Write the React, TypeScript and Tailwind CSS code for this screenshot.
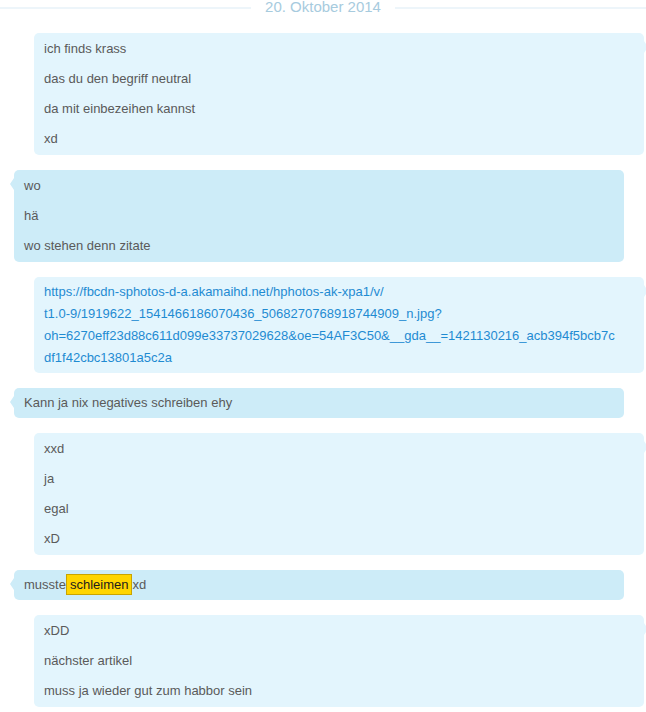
import React from 'react';

type Side = 'left' | 'right';

interface Message {
  side: Side;
  lines: React.ReactNode[];
}

const linkUrl =
  'https://fbcdn-sphotos-d-a.akamaihd.net/hphotos-ak-xpa1/v/t1.0-9/1919622_1541466186070436_5068270768918744909_n.jpg?oh=6270eff23d88c611d099e33737029628&oe=54AF3C50&__gda__=1421130216_acb394f5bcb7cdf1f42cbc13801a5c2a';

const messages: Message[] = [
  {
    side: 'right',
    lines: ['ich finds krass', 'das du den begriff neutral', 'da mit einbezeihen kannst', 'xd'],
  },
  {
    side: 'left',
    lines: ['wo', 'hä', 'wo stehen denn zitate'],
  },
  {
    side: 'right',
    lines: [
      <a key="url" href={linkUrl} className="text-[#1f8bd2] no-underline">
        https://fbcdn-sphotos-d-a.akamaihd.net/hphotos-ak-xpa1/v/
        <br />
        t1.0-9/1919622_1541466186070436_5068270768918744909_n.jpg?
        <br />
        oh=6270eff23d88c611d099e33737029628&amp;oe=54AF3C50&amp;__gda__=1421130216_acb394f5bcb7c
        <br />
        df1f42cbc13801a5c2a
      </a>,
    ],
  },
  {
    side: 'left',
    lines: ['Kann ja nix negatives schreiben ehy'],
  },
  {
    side: 'right',
    lines: ['xxd', 'ja', 'egal', 'xD'],
  },
  {
    side: 'left',
    lines: [
      <>
        musste
        <span className="border border-[#c9a400] bg-[#ffd500] px-[3px] py-[2px] text-[#1c1c1c]">
          schleimen
        </span>
        xd
      </>,
    ],
  },
  {
    side: 'right',
    lines: ['xDD', 'nächster artikel', 'muss ja wieder gut zum habbor sein'],
  },
];

function Bubble({ message }: { message: Message }) {
  const isLeft = message.side === 'left';
  const multi = message.lines.length > 1;

  return (
    <div
      className={[
        'relative rounded-[5px]',
        isLeft ? 'ml-[14px] mr-[22px] bg-[#cdecf8]' : 'ml-[34px] mr-[2px] bg-[#e3f5fd]',
        multi ? 'py-px' : '',
      ].join(' ')}
    >
      {/* little tail pointing at the sender */}
      {isLeft ? (
        <span className="absolute left-[-4px] top-[8px] h-0 w-0 border-y-[6px] border-r-[4px] border-y-transparent border-r-[#cdecf8]" />
      ) : (
        <span className="absolute right-[-4px] top-[8px] h-0 w-0 border-y-[6px] border-l-[4px] border-y-transparent border-l-[#e3f5fd]" />
      )}
      {message.lines.map((line, i) => (
        <p key={i} className="px-[10px] py-1 text-[13px] leading-[22px] text-[#5a5a5a]">
          {line}
        </p>
      ))}
    </div>
  );
}

export default function App() {
  return (
    <div
      className="min-h-[712px] w-[646px] overflow-hidden bg-white"
      style={{ fontFamily: '"Liberation Sans", Arial, Helvetica, sans-serif' }}
    >
      <div className="-mt-[3px] flex h-[20px] items-center gap-[14px]">
        <div className="mt-[2px] h-[2px] flex-1 bg-[#edf5fa]" />
        <span className="text-[15px] leading-[20px] text-[#a7cbde]">20. Oktober 2014</span>
        <div className="mt-[2px] h-[2px] flex-1 bg-[#edf5fa]" />
      </div>

      <div className="mt-[16px] flex flex-col gap-[15px]">
        {messages.map((message, i) => (
          <Bubble key={i} message={message} />
        ))}
      </div>
    </div>
  );
}
